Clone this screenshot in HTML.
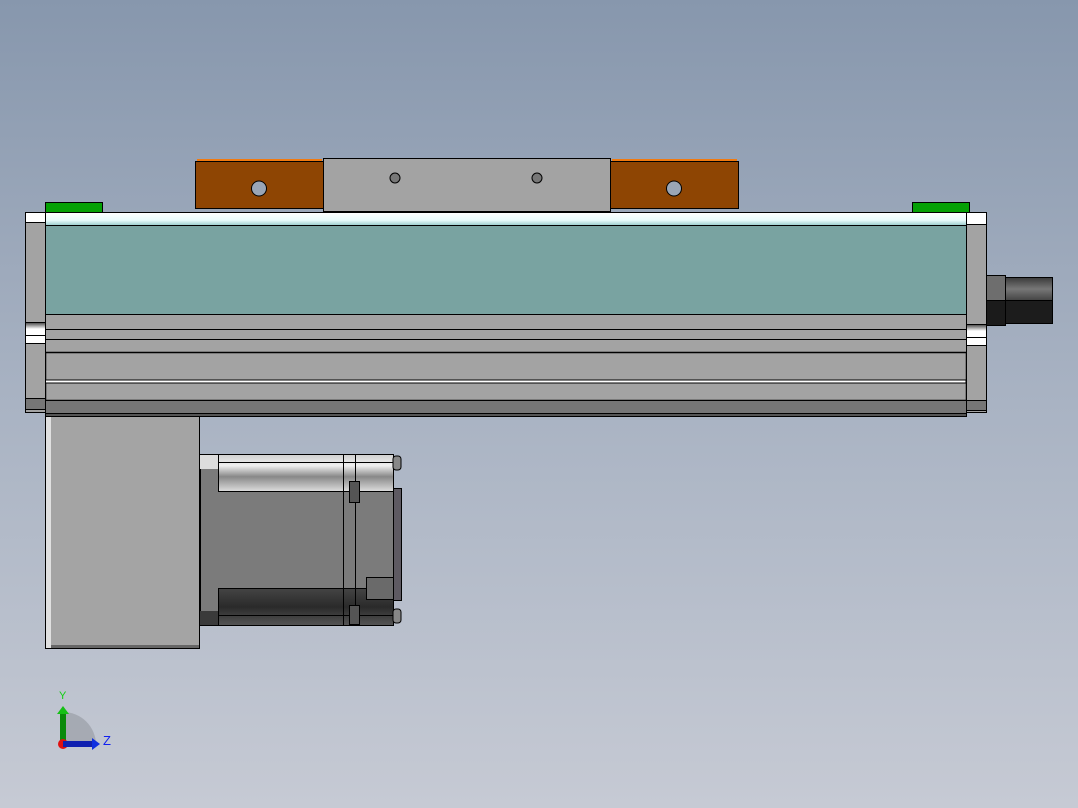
<!DOCTYPE html>
<html><head><style>
html,body{margin:0;padding:0}
body{width:1078px;height:808px;overflow:hidden;background:linear-gradient(#8797ad,#a9b3c3 50%,#c6cad4);}
svg{position:absolute;left:0;top:0}
</style></head><body>
<svg width="1078" height="808" viewBox="0 0 1078 808">
<defs>
<linearGradient id="cyl" x1="0" y1="0" x2="0" y2="1"><stop offset="0" stop-color="#444"/><stop offset=".5" stop-color="#fff"/><stop offset="1" stop-color="#fff"/></linearGradient>
<linearGradient id="wt" x1="0" y1="0" x2="0" y2="1"><stop offset="0" stop-color="#fff"/><stop offset=".6" stop-color="#e8fbfb"/><stop offset="1" stop-color="#9cc"/></linearGradient>
<linearGradient id="con1" x1="0" y1="0" x2="0" y2="1"><stop offset="0" stop-color="#3a3a3a"/><stop offset=".5" stop-color="#777"/><stop offset="1" stop-color="#444"/></linearGradient>
<linearGradient id="mt" x1="0" y1="0" x2="0" y2="1"><stop offset="0" stop-color="#cfcfcf"/><stop offset=".3" stop-color="#f0f0f0"/><stop offset=".6" stop-color="#888"/><stop offset="1" stop-color="#ddd"/></linearGradient>
<linearGradient id="mb" x1="0" y1="0" x2="0" y2="1"><stop offset="0" stop-color="#444"/><stop offset=".5" stop-color="#2a2a2a"/><stop offset="1" stop-color="#555"/></linearGradient>
</defs>
<g stroke="#000" stroke-width="1">
<!-- green blocks -->
<rect x="45.5" y="202.5" width="57" height="10" fill="#04a004"/>
<rect x="912.5" y="202.5" width="57" height="10" fill="#04a004"/>
<!-- carriage -->
<rect x="195.5" y="161.5" width="128" height="47" fill="#8e4503"/>
<rect x="610.5" y="161.5" width="128" height="47" fill="#8e4503"/>
<rect x="197" y="159" width="125" height="2" fill="#f07a10" stroke="none"/>
<rect x="612" y="159" width="125" height="2" fill="#f07a10" stroke="none"/>
<circle cx="259" cy="188.5" r="7.5" fill="#9aa6b6"/>
<circle cx="674" cy="188.5" r="7.5" fill="#9aa6b6"/>
<rect x="323.5" y="158.5" width="287" height="53" fill="#a3a3a3"/>
<circle cx="395" cy="178" r="5" fill="#777"/>
<circle cx="537" cy="178" r="5" fill="#777"/>
<!-- main profile -->
<rect x="45.5" y="212.5" width="921" height="13" fill="url(#wt)"/>
<rect x="45.5" y="225.5" width="921" height="89" fill="#79a3a1"/>
<rect x="45.5" y="314.5" width="921" height="38" fill="#a3a3a3"/>
<line x1="45" y1="329.5" x2="966" y2="329.5"/>
<line x1="45" y1="339.5" x2="966" y2="339.5"/>
<rect x="45.5" y="352.5" width="921" height="48" fill="#a3a3a3" stroke-width="1.5"/>
<rect x="45" y="380" width="921" height="3" fill="#fff"/>
<rect x="45.5" y="400.5" width="921" height="13" fill="#767676"/>
<rect x="45.5" y="413.5" width="921" height="3" fill="#555"/>
<!-- caps -->
<g>
<rect x="25.5" y="212.5" width="20" height="200" fill="#a3a3a3"/>
<rect x="25.5" y="212.5" width="20" height="10" fill="#fff"/>
<rect x="25.5" y="322.5" width="20" height="13" fill="url(#cyl)"/>
<rect x="25.5" y="335.5" width="20" height="8" fill="#fff"/>
<rect x="25.5" y="398.5" width="20" height="11" fill="#767676"/>
<rect x="966.5" y="212.5" width="20" height="200" fill="#a3a3a3"/>
<rect x="966.5" y="212.5" width="20" height="12" fill="#fff"/>
<rect x="966.5" y="324.5" width="20" height="13" fill="url(#cyl)"/>
<rect x="966.5" y="337.5" width="20" height="8" fill="#fff"/>
<rect x="966.5" y="400.5" width="20" height="10" fill="#767676"/>
</g>
<!-- connector -->
<rect x="986.5" y="275.5" width="19" height="25" fill="#6e6e6e"/>
<rect x="986.5" y="300.5" width="19" height="25" fill="#1b1b1b"/>
<rect x="1005.5" y="277.5" width="47" height="23" fill="url(#con1)"/>
<rect x="1005.5" y="300.5" width="47" height="23" fill="#1c1c1c"/>
<!-- gearbox -->
<rect x="45.5" y="416.5" width="154" height="232" fill="#a4a4a4"/>
<rect x="46" y="417" width="5" height="231" fill="#e0e0e0" stroke="none"/>
<rect x="51" y="645" width="148" height="3" fill="#666" stroke="none"/>
<!-- motor -->
<rect x="200.5" y="454.5" width="193" height="171" fill="#7b7b7b"/>
<rect x="200" y="455" width="18" height="14" fill="#ddd" stroke="none"/>
<rect x="218.5" y="454.5" width="175" height="37" fill="url(#mt)"/>
<line x1="218" y1="462.5" x2="393" y2="462.5"/>
<rect x="218.5" y="588.5" width="175" height="37" fill="url(#mb)"/>
<line x1="218" y1="615.5" x2="393" y2="615.5"/>
<rect x="200" y="611" width="18" height="14" fill="#3a3a3a" stroke="none"/>
<line x1="343.5" y1="454" x2="343.5" y2="625"/>
<line x1="355.5" y1="454" x2="355.5" y2="625"/>
<rect x="349.5" y="481.5" width="10" height="21" fill="#555"/>
<rect x="349.5" y="605.5" width="10" height="19" fill="#555"/>
<rect x="366.5" y="577.5" width="27" height="22" fill="#6a6a6a"/>
<rect x="393.5" y="488.5" width="8" height="112" fill="#5e5a62"/>
<rect x="393" y="456" width="8" height="14" fill="#888" rx="3"/>
<rect x="393" y="609" width="8" height="14" fill="#888" rx="3"/>
</g>
<!-- triad -->
<path d="M63 745 L63 712 A33 33 0 0 1 96 745 Z" fill="#9a9ea6" opacity=".7"/>
<rect x="60" y="712" width="6" height="33" fill="#0a8a0a"/>
<path d="M57 714 L63 706 L69 714 Z" fill="#16c016"/>
<circle cx="63" cy="744" r="5" fill="#e01010"/>
<rect x="63" y="741" width="30" height="6" fill="#1020b0"/>
<path d="M92 738 L100 744 L92 750 Z" fill="#1030e0"/>
<text x="59" y="699" font-family="Liberation Sans,sans-serif" font-size="11" fill="#10d010">Y</text>
<text x="103" y="745" font-family="Liberation Sans,sans-serif" font-size="13" fill="#1020f0">Z</text>
</svg>
</body></html>
